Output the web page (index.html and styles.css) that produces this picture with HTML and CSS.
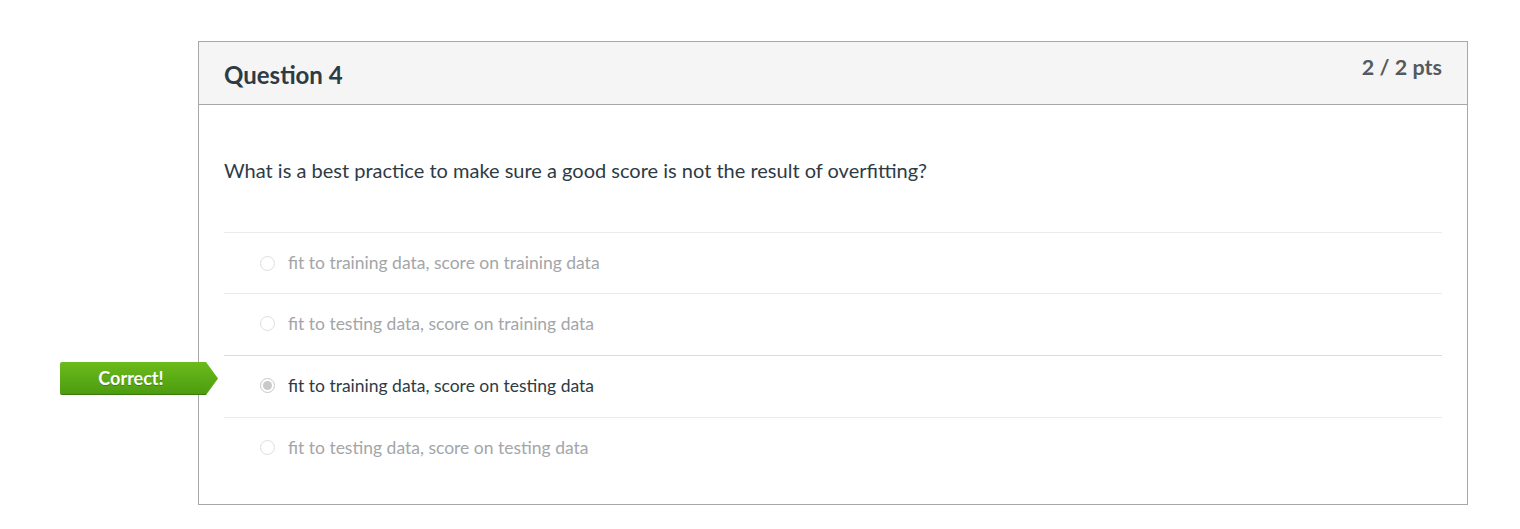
FILE: index.html
```html
<!DOCTYPE html>
<html>
<head>
<meta charset="utf-8">
<link rel="stylesheet" href="styles.css">
</head>
<body>
<div class="page">
  <div class="card">
    <div class="card-header">
      <h2 class="q-title">Question 4</h2>
      <span class="q-points">2 / 2 pts</span>
    </div>
    <div class="card-body">
      <p class="q-text">What is a best practice to make sure a good score is not the result of overfitting?</p>
      <div class="answers">
        <div class="answer">
          <span class="radio"></span>
          <span class="answer-text">fit to training data, score on training data</span>
        </div>
        <div class="answer">
          <span class="radio"></span>
          <span class="answer-text">fit to testing data, score on training data</span>
        </div>
        <div class="answer selected">
          <span class="badge">Correct!</span>
          <span class="radio checked"></span>
          <span class="answer-text">fit to training data, score on testing data</span>
        </div>
        <div class="answer">
          <span class="radio"></span>
          <span class="answer-text">fit to testing data, score on testing data</span>
        </div>
      </div>
    </div>
  </div>
</div>
</body>
</html>
```

FILE: styles.css
```css
* { box-sizing: border-box; }
html, body { margin: 0; padding: 0; background: #fff; }
body { font-family: Lato, "Open Sans", sans-serif; color: #2d3b45; }

.page { padding: 41px 0 0 198px; }

.card {
  width: 1270px;
  border: 1px solid #a8a8a8;
  background: #fff;
}

.card-header {
  height: 63px;
  background: #f5f5f5;
  border-bottom: 1px solid #a8a8a8;
  display: flex;
  justify-content: space-between;
  align-items: flex-start;
  padding: 0 25px;
}

.q-title {
  margin: 0;
  padding-top: 19px;
  font-size: 24px;
  font-weight: 700;
  line-height: 28px;
  color: #2d3b45;
}

.q-points {
  padding-top: 12px;
  font-size: 21.5px;
  font-weight: 700;
  line-height: 26px;
  color: #555a5e;
}

.card-body { padding: 0 25px 25px 25px; }

.q-text {
  margin: 0;
  padding: 52px 0 0 0;
  height: 127px;
  font-size: 20px;
  line-height: 26px;
  color: #2d3b45;
}

.answers { display: flex; flex-direction: column; }

.answer {
  position: relative;
  height: 62px;
  border-top: 1px solid #ebebeb;
  display: flex;
  align-items: center;
  padding-left: 37px;
  padding-bottom: 2px;
  font-size: 17.5px;
  color: #a3a6a9;
}
.answer:first-child { height: 61px; padding-bottom: 0; }
.answer.selected { color: #2d3b45; border-top-color: #dcdcdc; }

.radio {
  width: 15px;
  height: 15px;
  border-radius: 50%;
  border: 1px solid #dedede;
  background: #fff;
  margin-left: -1px;
  margin-right: 13px;
  flex: none;
  display: flex;
  align-items: center;
  justify-content: center;
}
.radio.checked { border-color: #c8c8c8; }
.radio.checked::after {
  content: "";
  width: 9px;
  height: 9px;
  border-radius: 50%;
  background: #c9c9c9;
}

.answer-text { line-height: 22px; }

.badge {
  position: absolute;
  left: -164px;
  top: 6px;
  width: 146px;
  height: 33px;
  display: flex;
  align-items: center;
  justify-content: center;
  padding-right: 4px;
  background: linear-gradient(#6bbb1b, #4d9c10);
  border-bottom: 1px solid #3b7a0c;
  border-radius: 2px 0 0 2px;
  color: #fff;
  font-size: 18px;
  font-weight: 700;
  text-shadow: 0 1px 0 rgba(0,0,0,0.25);
}
.badge::after {
  content: "";
  position: absolute;
  right: -12px;
  top: 0;
  width: 12px;
  height: 33px;
  background: linear-gradient(#6bbb1b, #4d9c10);
  clip-path: polygon(0 0, 100% 50%, 0 100%);
}
```
